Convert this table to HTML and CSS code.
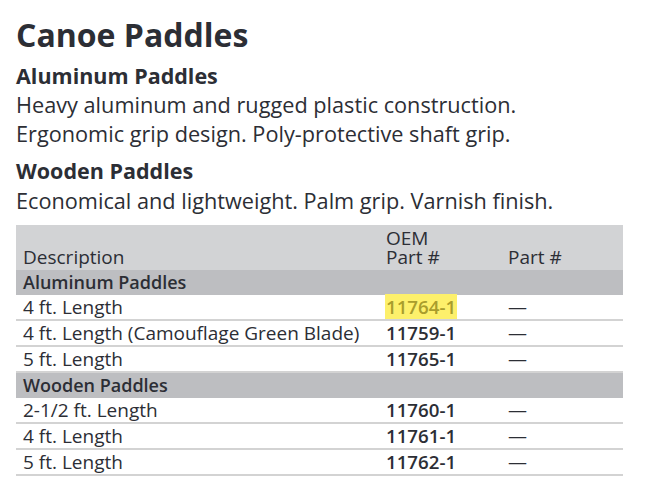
FILE: index.html
```html
<!DOCTYPE html>
<html>
<head>
<meta charset="utf-8">
<link rel="stylesheet" href="styles.css">
</head>
<body>
<div class="page">
  <h1 class="title">Canoe Paddles</h1>
  <h2 class="sub sub-first">Aluminum Paddles</h2>
  <p class="desc">Heavy aluminum and rugged plastic construction.<br>Ergonomic grip design. Poly-protective shaft grip.</p>
  <h2 class="sub sub-next">Wooden Paddles</h2>
  <p class="desc desc-last">Economical and lightweight. Palm grip. Varnish finish.</p>
  <table class="parts">
    <thead>
      <tr>
        <th class="c-desc">Description</th>
        <th class="c-oem"><div>OEM</div><div>Part #</div></th>
        <th class="c-part">Part #</th>
      </tr>
    </thead>
    <tbody>
      <tr class="section"><td colspan="3">Aluminum Paddles</td></tr>
      <tr><td>4 ft. Length</td><td class="num"><span class="hl">11764-1</span></td><td>—</td></tr>
      <tr><td>4 ft. Length (Camouflage Green Blade)</td><td class="num">11759-1</td><td>—</td></tr>
      <tr><td>5 ft. Length</td><td class="num">11765-1</td><td>—</td></tr>
      <tr class="section"><td colspan="3">Wooden Paddles</td></tr>
      <tr><td>2-1/2 ft. Length</td><td class="num">11760-1</td><td>—</td></tr>
      <tr><td>4 ft. Length</td><td class="num">11761-1</td><td>—</td></tr>
      <tr><td>5 ft. Length</td><td class="num">11762-1</td><td>—</td></tr>
    </tbody>
  </table>
</div>
</body>
</html>
```

FILE: styles.css
```css
html, body {
  margin: 0;
  padding: 0;
  background: #ffffff;
}
.page {
  padding: 15px 0 0 16px;
  font-family: "Open Sans", "DejaVu Sans", sans-serif;
  color: #2c2e35;
}
.title {
  margin: 0;
  font-size: 32px;
  font-weight: 700;
  line-height: 40px;
}
.sub {
  margin: 0;
  font-size: 21.5px;
  font-weight: 700;
  line-height: 29px;
}
.sub-first { margin-top: 6px; }
.sub-next { margin-top: 8px; }
.desc {
  margin: 0;
  font-size: 21.7px;
  font-weight: 400;
  line-height: 29px;
}
.desc-last { margin-top: 1px; }
.parts {
  margin-top: 10px;
  width: 607px;
  border-collapse: collapse;
  font-size: 19px;
  line-height: 24px;
}
.parts th {
  background: #d2d3d5;
  font-weight: 400;
  text-align: left;
  vertical-align: bottom;
  padding: 0 0 3px 0;
  height: 42px;
  line-height: 19px;
}
.parts th.c-desc { padding-left: 7px; width: 363px; }
.parts th.c-oem { width: 122px; }
.parts td {
  padding: 0;
  height: 24px;
  border-bottom: 2px solid #d3d3d3;
}
.parts td:first-child { padding-left: 7px; }
.parts tr.section td {
  background: #bdbec1;
  font-size: 18px;
  font-weight: 600;
  height: 25px;
  border-bottom: none;
  line-height: 24px;
  vertical-align: top;
}
.num {
  font-weight: 600;
  font-size: 18.7px;
}
.hl {
  background: #fdf06b;
  color: #a99d2c;
  margin-left: -1px;
  padding: 0 1px;
}
```
